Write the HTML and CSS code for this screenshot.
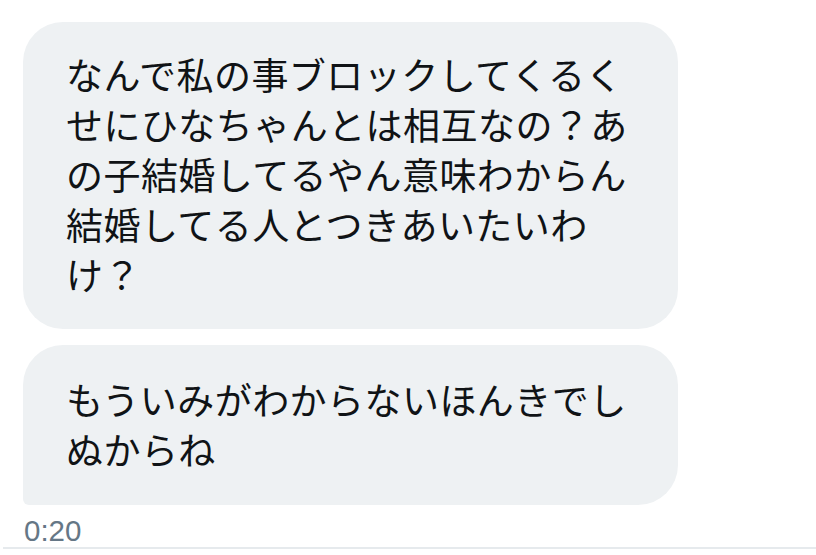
FILE: index.html
```html
<!DOCTYPE html>
<html lang="ja">
<head>
<meta charset="utf-8">
<link rel="stylesheet" href="styles.css">
</head>
<body>
<div class="thread">
  <div class="bubble first">なんで私の事ブロックしてくるくせにひなちゃんとは相互なの？あの子結婚してるやん意味わからん結婚してる人とつきあいたいわけ？</div>
  <div class="bubble last">もういみがわからないほんきでしぬからね</div>
  <div class="time">0:20</div>
</div>
<div class="rule"></div>
</body>
</html>
```
FILE: styles.css
```css
html, body {
  margin: 0;
  padding: 0;
  background: #ffffff;
}
.thread {
  padding: 22px 0 0 23px;
  display: flex;
  flex-direction: column;
  gap: 16px;
}
.bubble {
  width: 655px;
  box-sizing: border-box;
  padding: 27px 44px 30px 43px;
  background: #eef1f3;
  color: #101316;
  font-family: "Noto Sans CJK JP", "Noto Sans", sans-serif;
  font-size: 37px;
  line-height: 50px;
  letter-spacing: 0.45px;
  border-radius: 40px;
  line-break: strict;
}
.bubble.last {
  border-bottom-left-radius: 6px;
  padding-top: 29px;
  padding-bottom: 31px;
}
.time {
  margin-top: -7px;
  padding-left: 1px;
  font-family: "Liberation Sans", Arial, sans-serif;
  font-size: 29.5px;
  line-height: 33px;
  color: #657786;
}
.rule {
  margin: 0 0 0 3px;
  height: 2px;
  background: #e6eaed;
}
```
